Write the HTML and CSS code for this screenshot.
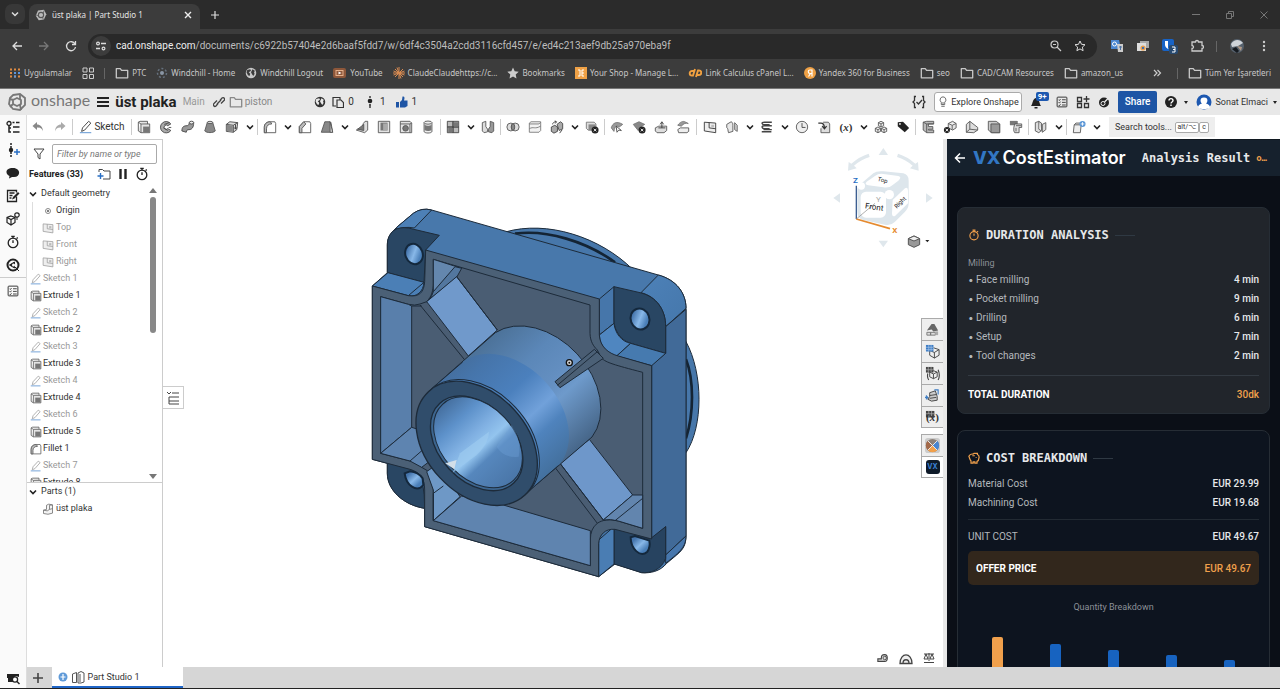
FILE: index.html
```html
<!DOCTYPE html>
<html lang="en">
<head>
<meta charset="utf-8">
<title>üst plaka | Part Studio 1</title>
<link rel="stylesheet" href="styles.css">
</head>
<body>
<svg class="defs" aria-hidden="true">
  <defs>
    <symbol id="caret" viewBox="0 0 10 10"><path d="M2 3.500l3 3 3-3" fill="none" stroke="#222" stroke-width="1.600"/></symbol>
    <symbol id="folder" viewBox="0 0 16 16"><path d="M1.500 3h4.500l1.500 2h7v8.500h-13z" fill="none" stroke="currentColor" stroke-width="1.500" stroke-linejoin="round"/></symbol>
    <symbol id="globe" viewBox="0 0 16 16"><circle cx="8" cy="8" r="7" fill="currentColor"/><path d="M3 4l4-1 1 2-3 2 2 2-1 3-2-1-2-4zM10 3l3 2-1 3 1 1-2 3-2-3-1-2z" fill="var(--land,#3c3c3c)"/></symbol>
    <symbol id="extrude" viewBox="0 0 16 16"><path d="M1.500 2.500l2-1h8.500v3M1.500 2.500v10l3 2M1.500 2.500l3 2" fill="#e4e4e4" stroke="#555"/><path d="M4.500 4.500h10v10h-10z" fill="#e4e4e4" stroke="#555"/><path d="M7 7.500h7v6.500h-7z" fill="#777"/></symbol>
    <symbol id="revolve" viewBox="0 0 16 16"><path d="M13.500 4.500A6.500 6.500 0 1 0 13.500 12L10 9.800A2.400 2.400 0 1 1 10 6.500z" fill="#aaa" stroke="#444"/><path d="M6 5l6-2M5 9l5 3M11 8.500h3" stroke="#444"/></symbol>
    <symbol id="sweep" viewBox="0 0 16 16"><path d="M1 12.500C1 8 3 6.500 7 6.500c2 0 2-1 2.500-3.500h5c0 6-2.500 8-5.500 8-2 0-2.500.5-3 3z" fill="#999" stroke="#444"/><ellipse cx="12" cy="3" rx="2.500" ry="1.600" fill="#eee" stroke="#444"/></symbol>
    <symbol id="loft" viewBox="0 0 16 16"><path d="M5 2.500h6l3 10c-2 2.500-10 2.500-12 0z" fill="#888" stroke="#555"/><ellipse cx="8" cy="2.800" rx="3" ry="1.300" fill="#ddd" stroke="#555"/></symbol>
    <symbol id="thicken" viewBox="0 0 16 16"><path d="M1.500 5l4-3 9 1-1 8-4 3-8-1z" fill="#ddd" stroke="#444"/><path d="M1.500 5l8 1 5-3M9.500 6v8" fill="none" stroke="#444"/><path d="M2 5.500l7 1v7l-7-1z" fill="#888"/><path d="M12 5v5M10.500 8.500l1.500 2 1.500-2" fill="none" stroke="#333"/></symbol>
    <symbol id="fillet" viewBox="0 0 16 16"><path d="M1.500 14.500v-6c0-4 2.500-6.500 7-6.500h5l1 2v10.500z" fill="#fff" stroke="#555"/><path d="M1.500 8.500c0-4 2.500-6.500 7-6.500l1.500 2.500c-4 0-6 2-6 5.500v4.500h-2.500z" fill="#bbb" stroke="#555"/></symbol>
    <symbol id="chamfer" viewBox="0 0 16 16"><path d="M1.500 14.500v-7l5-5.500h7l1 2v10.500z" fill="#fff" stroke="#555"/><path d="M1.500 7.500l5-5.500 2.500 2.500-4.500 5v5h-3z" fill="#bbb" stroke="#555"/></symbol>
    <symbol id="draft" viewBox="0 0 16 16"><path d="M1.500 14l4-12h6l1 1 2 11z" fill="#888" stroke="#555"/><path d="M11.500 2l3 12h-3z" fill="#ddd" stroke="#555"/></symbol>
    <symbol id="rib" viewBox="0 0 16 16"><path d="M9.500 4l2-2.500h3v10l-3.500 3-9.500-3 2-1.500 4 1z" fill="#ddd" stroke="#555"/><path d="M3 10.500L10 5v7z" fill="#777" stroke="#555"/></symbol>
    <symbol id="shell" viewBox="0 0 16 16"><path d="M1.500 1.500h13v13h-13z" fill="#e4e4e4" stroke="#555"/><path d="M4 3h8v9h-8z" fill="#777"/><path d="M7 4h5v8h-5z" fill="#aaa"/></symbol>
    <symbol id="hole" viewBox="0 0 16 16"><path d="M1.500 1.500h11l2 2v11h-13zM1.500 4.500h11v10M12.500 4.500l2-1" fill="#e4e4e4" stroke="#555"/><circle cx="7.500" cy="9.500" r="3.200" fill="#777" stroke="#555"/></symbol>
    <symbol id="thread" viewBox="0 0 16 16"><path d="M3.500 3v10c0 2.500 9 2.500 9 0V3" fill="#eee" stroke="#555"/><path d="M4 5.500c2 1.500 6 1.500 8 0v6c-2 1.500-6 1.500-8 0z" fill="#777"/><ellipse cx="8" cy="3" rx="4.500" ry="1.800" fill="#eee" stroke="#555"/></symbol>
    <symbol id="pattern" viewBox="0 0 16 16"><path d="M1.500 1.500h6.500v6.500h-6.500zM8 1.500h6.500v6.500H8zM1.500 8h6.500v6.500h-6.500zM8 8h6.500v6.500H8z" fill="#bbb" stroke="#444"/><path d="M9 2.500h5v5h-5zM2.500 9h5v5h-5z" fill="#777"/></symbol>
    <symbol id="mirror" viewBox="0 0 16 16"><path d="M1.500 3l4-1.500v6l2 3v3l-4 1-2-2z" fill="#ddd" stroke="#555"/><path d="M14.500 3l-4-1.500v6l-2 3v3l4 1 2-2z" fill="#999" stroke="#555"/></symbol>
    <symbol id="boolean" viewBox="0 0 16 16"><circle cx="5.500" cy="8" r="4.500" fill="#ddd" stroke="#555"/><circle cx="10.500" cy="8" r="4.500" fill="#ddd" stroke="#555"/><ellipse cx="8" cy="8" rx="2" ry="3.700" fill="#888" stroke="#555"/></symbol>
    <symbol id="split" viewBox="0 0 16 16"><path d="M1.500 3.500l2-1.500h11v10l-2 2h-11z" fill="#f2f2f2" stroke="#777"/><path d="M1.500 4.500h11l2-2M1.500 10c5-3 6 1 13-3" fill="none" stroke="#777"/></symbol>
    <symbol id="transform" viewBox="0 0 16 16"><path d="M1.500 8l4-2 3 2v5l-4 2-3-2zM8 5l4-3 2.500 2v6l-4 2z" fill="#aaa" stroke="#444"/><path d="M3 5c0-2 2-3 4-3M5.500 1l2 1-1.500 2M14 11l-3 4" fill="none" stroke="#333"/></symbol>
    <symbol id="deletepart" viewBox="0 0 16 16"><path d="M1.500 2.500h9l2 2v7h-9l-2-2z" fill="#ddd" stroke="#777"/><path d="M4 5h8v7h-8z" fill="#888"/><circle cx="11.500" cy="11.500" r="4" fill="#222"/><path d="M10 10l3 3M13 10l-3 3" stroke="#fff"/></symbol>
    <symbol id="modface" viewBox="0 0 16 16"><path d="M1.500 9C3 3 8 1 14.500 5l-4 3c-3-2-5-1-6 5z" fill="#999" stroke="#777"/><path d="M7 7l1 7 2-2.500 3 .5z" fill="#fff" stroke="#444"/></symbol>
    <symbol id="delface" viewBox="0 0 16 16"><path d="M1.500 5L8 2l6.500 3-4 2.500L7 12z" fill="#888" stroke="#777"/><circle cx="11.500" cy="11.500" r="4" fill="#222"/><path d="M10 10l3 3M13 10l-3 3" stroke="#fff"/></symbol>
    <symbol id="moveface" viewBox="0 0 16 16"><path d="M1.500 9l4-2h9v5l-3 2.500h-8l-2-2z" fill="#ddd" stroke="#555"/><path d="M5 9h8M9 9V3M7 5l2-3 2 3" fill="none" stroke="#333"/></symbol>
    <symbol id="replace" viewBox="0 0 16 16"><path d="M2 6c3-4 6-5 8-4l4 2c-3-1-5 0-8 3z" fill="#999" stroke="#777"/><path d="M2 11l3-2h9.500v4l-2 1.500H3z" fill="#eee" stroke="#555"/></symbol>
    <symbol id="plane" viewBox="0 0 16 16"><path d="M1.500 2.500l13 1v11l-13-2z" fill="#eee" stroke="currentColor"/><path d="M7 3v6l7.500 1" fill="none" stroke="currentColor"/><path d="M9.500 5.500h3v3h-3z" fill="#bbb"/></symbol>
    <symbol id="surface" viewBox="0 0 16 16"><path d="M2 5l5-3c2 1 2 2 2 4v7l-5 1.500c-1-3 0-4-2-6z" fill="#e8e8e8" stroke="#555"/><path d="M11 3l3 3v7l-3-2z" fill="#ccc" stroke="#666"/></symbol>
    <symbol id="helix" viewBox="0 0 16 16"><path d="M13.500 2.500H5c-4 0-3 3 0 3h6M13.500 6.500H5c-4 0-3 3.500 0 3.500h6M13.500 11H4M2 13.500h11" fill="none" stroke="#444" stroke-width="1.600"/></symbol>
    <symbol id="clock" viewBox="0 0 16 16"><circle cx="8" cy="8" r="6.500" fill="#eee" stroke="#555"/><path d="M8 3.500v5h4" fill="none" stroke="#444"/></symbol>
    <symbol id="derived" viewBox="0 0 16 16"><path d="M7 2.500h6l1.500 2v10h-10v-5" fill="#ddd" stroke="#555"/><path d="M1.500 3.500h3c3 0 4 2 4 6M6 7l2.500 3L11 7" fill="none" stroke="#333" stroke-width="1.400"/></symbol>
    <symbol id="composite" viewBox="0 0 16 16"><path d="M8 1.500l3 1.500v3.500L8 8 5 6.500V3zM4.500 8l3 1.500V13l-3 1.500-3-1.500V9.500zM11.500 8l3 1.500V13l-3 1.500-3-1.500V9.500zM5 3l3 1.500L11 3M8 4.500V8M1.500 9.500l3 1.500 3-1.500M4.500 11v3.500M8.500 9.500l3 1.500 3-1.500M11.500 11v3.500" fill="#eee" stroke="#555"/></symbol>
    <symbol id="tag" viewBox="0 0 16 16"><path d="M2 2.500l6-.5 7 7-5 5-8-7z" fill="#222"/><circle cx="4.500" cy="4.500" r="1" fill="#fff"/></symbol>
    <symbol id="bracket" viewBox="0 0 16 16"><path d="M2.500 2.500l4-1h8v3h-6v3h5v3h-5v1h6v3h-8l-4-3z" fill="#bbb" stroke="#555"/><path d="M2.500 2.500l4 2v10M6.500 4.500h8" fill="none" stroke="#555"/></symbol>
    <symbol id="boxx" viewBox="0 0 16 16"><path d="M6 4l5-2.500L15 4v5l-4 2.500L6 9zM6 4l4.500 2L15 4M10.500 6v5" fill="#e4e4e4" stroke="#555"/><circle cx="4.500" cy="11.500" r="3.500" fill="#222"/><path d="M3 10l3 3M6 10l-3 3" stroke="#fff"/></symbol>
    <symbol id="bend" viewBox="0 0 16 16"><path d="M1.500 14V5l4-3.500 9 7v3L10 14.500z" fill="#ddd" stroke="#555"/><path d="M5.500 1.500v9l9 1M1.500 14l4-3.500" fill="none" stroke="#555"/></symbol>
    <symbol id="square" viewBox="0 0 16 16"><path d="M1.500 1.500h9l4 3v10h-9l-4-3z" fill="#ccc" stroke="#555"/><path d="M4.500 4.500h10v10h-10z" fill="#999" stroke="#555"/></symbol>
    <symbol id="pencil" viewBox="0 0 16 16"><path d="M3 13l1-4 7-7.500 2.500 2L6.500 11.500z" fill="none" stroke="currentColor"/><path d="M1 14.500h13" stroke="#4b88cc"/></symbol>
    <symbol id="checklist" viewBox="0 0 16 16"><rect x="1.500" y="1.500" width="13" height="13" rx="1" fill="none" stroke="#333" stroke-width="1.300"/><path d="M3.500 5l1 1 1.500-2M3.500 8.500l1 1 1.500-2M3.500 12l1 1 1.500-2M8 5h5M8 8.500h5M8 12h5" fill="none" stroke="#333" stroke-width="1.200"/></symbol>
    <symbol id="stopwatch" viewBox="0 0 16 16"><circle cx="8" cy="9" r="5.500" fill="none" stroke="currentColor" stroke-width="1.500"/><path d="M6 1.500h4M8 2v2M12 4l1.500-1M8 9V6" stroke="currentColor" stroke-width="1.500"/></symbol>
    <symbol id="part" viewBox="0 0 16 16"><path d="M2 9.500l4-1V3l3-1.500 5 1v11l-6 1.500-6-1z" fill="#f4f4f4" stroke="#666"/><path d="M2 9.500l5 1 3-2V3l4-.5M10 8.500l4-1" fill="none" stroke="#666"/></symbol>
  </defs>
</svg>

<header class="browser">
  <div class="tabstrip">
    <button class="tabsearch" aria-label="Search tabs"><svg viewBox="0 0 10 10" class="i10"><path d="M2 3.500l3 3 3-3" fill="none" stroke="#ddd" stroke-width="1.500"/></svg></button>
    <div class="tab">
      <svg viewBox="0 0 16 16" class="i12"><path d="M4 2l8-1 3 6-3 7-7 1-4-6z" fill="#bbb"/><circle cx="8" cy="8" r="3.500" fill="none" stroke="#555" stroke-width="1.500"/><path d="M1 8l4 1M12 2l-1 4M11 14l-1-3" stroke="#555"/></svg>
      <span>üst plaka | Part Studio 1</span>
      <button aria-label="Close tab"><svg viewBox="0 0 10 10" class="i10"><path d="M2 2l6 6M8 2l-6 6" stroke="#eee" stroke-width="1.400"/></svg></button>
    </div>
    <button class="newtab" aria-label="New tab"><svg viewBox="0 0 10 10" class="i10"><path d="M5 1v8M1 5h8" stroke="#ddd" stroke-width="1.200"/></svg></button>
    <div class="winctl">
      <button aria-label="Minimize"><svg viewBox="0 0 10 10" class="i10"><path d="M1 4.500h8" stroke="#777"/></svg></button>
      <button aria-label="Restore"><svg viewBox="0 0 10 10" class="i10"><path d="M1.500 3.500h5v5h-5zM3.500 3v-1.500h5v5h-1.500" fill="none" stroke="#777"/></svg></button>
      <button aria-label="Close"><svg viewBox="0 0 10 10" class="i10"><path d="M1.500 1.500l7 7M8.500 1.500l-7 7" stroke="#777"/></svg></button>
    </div>
  </div>
  <div class="address">
    <button aria-label="Back"><svg viewBox="0 0 12 12" class="i12"><path d="M11 6H2M6 2L2 6l4 4" fill="none" stroke="#ddd" stroke-width="1.300"/></svg></button>
    <button aria-label="Forward"><svg viewBox="0 0 12 12" class="i12"><path d="M1 6h9M6 2l4 4-4 4" fill="none" stroke="#777" stroke-width="1.300"/></svg></button>
    <button aria-label="Reload"><svg viewBox="0 0 12 12" class="i12"><path d="M10 4A4.500 4.500 0 1 0 10.500 7M10.500 1v3.500H7" fill="none" stroke="#ddd" stroke-width="1.300"/></svg></button>
    <div class="omnibox">
      <span class="site"><svg viewBox="0 0 12 12" class="i12"><circle cx="3" cy="3.500" r="1.400" fill="none" stroke="#ddd" stroke-width="1.200"/><path d="M6 3.500h5M1 8.500h4" stroke="#ddd" stroke-width="1.300"/><circle cx="8.500" cy="8.500" r="1.400" fill="none" stroke="#ddd" stroke-width="1.200"/></svg></span>
      <span class="url"><b>cad.onshape.com</b>/documents/c6922b57404e2d6baaf5fdd7/w/6df4c3504a2cdd3116cfd457/e/ed4c213aef9db25a970eba9f</span>
      <button aria-label="Zoom"><svg viewBox="0 0 12 12" class="i12"><circle cx="4.500" cy="4.500" r="3.500" fill="none" stroke="#ccc" stroke-width="1.200"/><path d="M7 7l4 4M3 4.500h3" stroke="#ccc" stroke-width="1.200"/></svg></button>
      <button aria-label="Bookmark"><svg viewBox="0 0 12 12" class="i12"><path d="M6 1l1.500 3.300 3.500.4-2.600 2.400.7 3.600L6 8.900l-3.100 1.800.7-3.600L1 4.700l3.500-.4z" fill="none" stroke="#ddd"/></svg></button>
    </div>
    <div class="exts">
      <svg viewBox="0 0 14 14" class="i14"><path d="M1 1h8l2 9H1z" fill="#4b87d0"/><path d="M7 5h6v8H8z" fill="#ccc"/><circle cx="4.500" cy="5" r="2" fill="none" stroke="#fff"/><path d="M9 8h3M10.500 7v4" stroke="#4b6fa0"/></svg>
      <svg viewBox="0 0 14 14" class="i14"><path d="M4 2h9v7H4z" fill="#aaa"/><path d="M1 4h9v8H1z" fill="#ddd"/><circle cx="7" cy="9" r="2.600" fill="#f0a048"/><circle cx="7" cy="9" r="1.200" fill="#3b70b8"/></svg>
      <svg viewBox="0 0 16 16" class="i16"><rect x="0" y="1" width="12" height="12" rx="2" fill="#1763c6"/><path d="M3 3h6v4c0 2-2 3-3 4-1-1-3-2-3-4z" fill="#fff"/><path d="M6 3h3v4c0 2-2 3-3 4z" fill="#1763c6"/><rect x="7" y="7" width="9" height="9" rx="2" fill="#284a70"/><path d="M10 9h3v5h-3M11 11.500h2" stroke="#fff" fill="none"/></svg>
      <svg viewBox="0 0 14 14" class="i14"><path d="M2 3h3.500a1.500 1.500 0 1 1 3 0H12v3.500a1.500 1.500 0 1 1 0 3V12H2V9.500a1.500 1.500 0 0 0 0-3z" fill="none" stroke="#ccc" stroke-width="1.300"/></svg>
      <i class="bar"></i>
      <svg viewBox="0 0 16 16" class="i16"><circle cx="8" cy="8" r="7" fill="#56616d"/><path d="M2 6c3-5 9-5 12-1l-5 3-6 1z" fill="#cfd4da"/><path d="M3 11l4-2 3 4-2 2z" fill="#151a20"/><path d="M8 8l5 1-1 4z" fill="#b19a88"/></svg>
      <svg viewBox="0 0 14 14" class="i14"><circle cx="7" cy="3" r="1.200" fill="#ccc"/><circle cx="7" cy="7" r="1.200" fill="#ccc"/><circle cx="7" cy="11" r="1.200" fill="#ccc"/></svg>
    </div>
  </div>
  <nav class="bookmarks">
    <a href="#"><svg viewBox="0 0 12 12" class="i12"><path d="M1 2.500h10M1 6h10M1 9.500h10" stroke="#e08b42" stroke-width="2" stroke-dasharray="2 2"/><path d="M5 6h6M5 9.500h2" stroke="#5b95dd" stroke-width="2" stroke-dasharray="2 2"/></svg>Uygulamalar</a>
    <a href="#" aria-label="Tab groups"><svg viewBox="0 0 12 12" class="i12"><path d="M1 1h4v4H1zM7.500 1h4v4h-4zM1 7.500h4v4H1zM7.500 7.500h4v4h-4z" fill="none" stroke="#ccc"/></svg></a>
    <i class="bar"></i>
    <a href="#"><svg class="i14"><use href="#folder"/></svg>PTC</a>
    <a href="#"><svg viewBox="0 0 12 12" class="i12"><circle cx="6" cy="6" r="2" fill="#8a96a5"/><circle cx="6" cy="6" r="4.500" fill="none" stroke="#66717e" stroke-dasharray="2 2" stroke-width="1.500"/></svg>Windchill - Home</a>
    <a href="#"><svg class="i12"><use href="#globe"/></svg>Windchill Logout</a>
    <a href="#"><svg viewBox="0 0 14 12" class="i14"><rect x="0" y="1" width="13" height="10" rx="2" fill="#8d573a"/><rect x="3" y="3.500" width="7" height="5" fill="none" stroke="#e6b08a"/><path d="M5.500 4.500l3 1.500-3 1.500z" fill="#fff"/></svg>YouTube</a>
    <a href="#"><svg viewBox="0 0 12 12" class="i12"><path d="M6 0v12M0 6h12M2 2l8 8M10 2l-8 8M4 .5l4 11M.5 8l11-4M.5 4l11 4" stroke="#d68a52"/></svg>ClaudeClaudehttps://c...</a>
    <a href="#"><svg viewBox="0 0 12 12" class="i12"><path d="M6 .5l1.700 3.700 4 .5-3 2.700.8 4L6 9.400l-3.500 2 .8-4-3-2.700 4-.5z" fill="#ccc"/></svg>Bookmarks</a>
    <a href="#"><svg viewBox="0 0 12 12" class="i12"><path d="M0 0h12v12H0z" fill="#efa146"/><path d="M3 3h2v6H3M9 3H7v6h2M7 6h2" fill="none" stroke="#fff"/></svg>Your Shop - Manage L...</a>
    <a href="#"><svg viewBox="0 0 14 12" class="i14"><path d="M6 4H4a2.300 2.300 0 0 0 0 4.600h1L7 2M8 10l2-6.500h1a2.200 2.200 0 0 1 0 4.500H8" fill="none" stroke="#f0a040" stroke-width="1.900"/></svg>Link Calculus cPanel L...</a>
    <a href="#"><svg viewBox="0 0 12 12" class="i12"><circle cx="6" cy="6" r="6" fill="#efa146"/><path d="M8 2.500v7M8 3H6a1.500 1.500 0 0 0 0 3.500h2M6.500 6.500l-2 3" fill="none" stroke="#fff" stroke-width="1.200"/></svg>Yandex 360 for Business</a>
    <a href="#"><svg class="i14"><use href="#folder"/></svg>seo</a>
    <a href="#"><svg class="i14"><use href="#folder"/></svg>CAD/CAM Resources</a>
    <a href="#"><svg class="i14"><use href="#folder"/></svg>amazon_us</a>
    <button class="more" aria-label="More bookmarks"><svg viewBox="0 0 10 10" class="i10"><path d="M2 2l3 3-3 3M5.500 2l3 3-3 3" fill="none" stroke="#ccc" stroke-width="1.200"/></svg></button>
    <i class="bar"></i>
    <a href="#"><svg class="i14"><use href="#folder"/></svg>Tüm Yer İşaretleri</a>
  </nav>
</header>

<header class="docbar">
  <svg viewBox="0 0 18 18" class="i18"><path d="M5 2l7-1 5 4v7l-5 5-7-1-4-5 1-6z" fill="none" stroke="#777" stroke-width="1.800"/><path d="M9 5l4 2v4l-4 2-4-2V7zM1 6l5 1M12 1v5M12 12l1 5M5 11l-3 3" fill="none" stroke="#777" stroke-width="1.800"/></svg>
  <span class="brand">onshape</span>
  <button aria-label="Menu"><svg viewBox="0 0 12 12" class="i12"><path d="M0 2h12M0 6h12M0 10h12" stroke="#222" stroke-width="2"/></svg></button>
  <h1>üst plaka</h1>
  <span class="branch">Main</span>
  <button aria-label="Copy link" class="link"><svg viewBox="0 0 12 12" class="i12"><path d="M5 7.500l-2 2.500a1.500 1.500 0 0 1-2-2.500L4 4.500M7 4.500L9 2a1.500 1.500 0 0 1 2 2.500L8 7.500M4 8l4-4" fill="none" stroke="#444" stroke-width="1.300"/></svg></button>
  <a href="#" class="loc"><svg class="i14"><use href="#folder"/></svg>piston</a>
  <div class="stats">
    <svg class="i12 world"><use href="#globe"/></svg>
    <span><svg viewBox="0 0 12 12" class="i12"><path d="M4 10H1V1.500h7V4M3 1.500h3M5 4h4l2.500 2.500v5H5z" fill="none" stroke="#333" stroke-width="1.200"/></svg>0</span>
    <span><svg viewBox="0 0 12 12" class="i12"><path d="M6 0v2M6 10v2" stroke="#222" stroke-width="1.300"/><circle cx="6" cy="5" r="2.300" fill="#222"/><circle cx="6" cy="9" r="1" fill="#222"/></svg>1</span>
    <span><svg viewBox="0 0 12 12" class="i12"><path d="M0 6h3v5.500H0zM4 6l2-2 .5-3.500c2-.5 2.500 1 1.500 4h3.500V10L9 11.500H4z" fill="#1f55a5"/></svg>1</span>
  </div>
  <div class="account">
    <button aria-label="Checks"><svg viewBox="0 0 14 14" class="i14"><path d="M4 1.500H2.500v4L1 7l1.500 1.500v4H4M10 1.500h1.500v4L13 7l-1.500 1.500v4H10M4.500 7l2 2 3.500-4" fill="none" stroke="#333" stroke-width="1.300"/></svg></button>
    <button class="explore"><svg viewBox="0 0 12 14" class="i12"><path d="M6 1a3.500 3.500 0 0 1 2 6.300V10H4V7.300A3.500 3.500 0 0 1 6 1zM4 12h4M6 7v3" fill="none" stroke="#555"/></svg>Explore Onshape</button>
    <button class="bell" aria-label="Notifications"><svg viewBox="0 0 14 14" class="i14"><path d="M1 11c2-2 1-7 5-8 4 1 3 6 5 8zM4.500 12h3v1.500h-3z" fill="#222"/></svg><span>9+</span></button>
    <button aria-label="Tasks"><svg class="i12"><use href="#checklist"/></svg></button>
    <button aria-label="Apps"><svg viewBox="0 0 14 14" class="i14"><path d="M1.500 2.500h4v4h-4zM1.500 8.500h4v4h-4zM8.500 8.500h4v4h-4zM10.500 1v6M7.500 4h6" fill="none" stroke="#333" stroke-width="1.300"/></svg></button>
    <button aria-label="Learning"><svg viewBox="0 0 12 12" class="i12"><circle cx="6" cy="6.500" r="5" fill="#222"/><circle cx="5" cy="7.500" r="2" fill="none" stroke="#eee"/><path d="M6.500 6L10 2.500" stroke="#eee" stroke-width="1.300"/></svg></button>
    <button class="share">Share</button>
    <button aria-label="Help" class="help"><svg viewBox="0 0 12 12" class="i12"><circle cx="6" cy="6" r="6" fill="#222"/><path d="M4 4.500c0-2.500 4-2.500 4 0C8 6 6 6 6 7.500M6 8.500V10" fill="none" stroke="#fff" stroke-width="1.400"/></svg><i class="tri"></i></button>
    <button class="user"><svg viewBox="0 0 16 16" class="i16"><circle cx="8" cy="8" r="7.500" fill="#1d58b0"/><path d="M8 3.500c5 0 3.500 5 2 6 3 1 4 2 4 4-3 2-9 2-12 0 0-2 1-3 4-4-1.500-1-3-6 2-6z" fill="#fff"/></svg>Sonat Elmaci<i class="tri"></i></button>
  </div>
</header>

<div class="workspace">
  <aside class="rail">
    <button aria-label="Feature list"><svg viewBox="0 0 14 14" class="i14"><circle cx="3" cy="3.500" r="2" fill="none" stroke="#222" stroke-width="1.300"/><path d="M3 5.500V12h2M6.500 2.500h2M10 2.500h3.500M7 7h6.500M7 12h6.500M3 8h2" fill="none" stroke="#222" stroke-width="1.500"/></svg></button>
    <button aria-label="Versions"><svg viewBox="0 0 14 14" class="i14"><circle cx="5" cy="7" r="2.200" fill="#222"/><path d="M5 0v2M5 3v2M5 9v2M5 12v2" stroke="#222" stroke-width="1.500"/><path d="M11 6v6M8 9h6" stroke="#2a6fc4" stroke-width="1.500"/></svg></button>
    <button aria-label="Comments"><svg viewBox="0 0 14 14" class="i14"><path d="M7 2c8 0 8 9 1 9-1 0-1 0-2 0l-3 1.500.5-2.500C-1 8-1 2 7 2z" fill="#222"/></svg></button>
    <button aria-label="Notes"><svg viewBox="0 0 14 14" class="i14"><path d="M10.500 7.500v5h-9v-11h9v2M3.500 4h5M3.500 6.500h3M3.500 9h2" fill="none" stroke="#222" stroke-width="1.300"/><path d="M6 10.500l1-2.500 5-5 1.500 1.500-5 5z" fill="#222"/></svg></button>
    <button aria-label="Render"><svg viewBox="0 0 14 14" class="i14"><path d="M5 4l4 1.500v5L5 13l-4-2.500v-5zM1 5.500L5 7.500l4-2M5 7.500V13" fill="none" stroke="#222" stroke-width="1.200"/><circle cx="11" cy="3" r="2.200" fill="none" stroke="#222" stroke-width="1.200"/><path d="M11 5v3" stroke="#222"/></svg></button>
    <button aria-label="History"><svg class="i14"><use href="#stopwatch"/></svg></button>
    <button aria-label="Assistant"><svg viewBox="0 0 14 14" class="i14"><circle cx="7" cy="7" r="5.500" fill="none" stroke="#222" stroke-width="2"/><path d="M3.500 7l5-3v6zM9 9l4 4" fill="#222" stroke="#222"/><circle cx="7.500" cy="7" r="1.500" fill="#fff"/></svg></button>
    <hr>
    <button aria-label="Tasks"><svg class="i12"><use href="#checklist"/></svg></button>
    <button class="last" aria-label="Find"><svg viewBox="0 0 14 14" class="i14"><path d="M1 3h12v3l-3-1-3 2v4H2V7H1z" fill="#222"/><circle cx="9" cy="8.500" r="2.600" fill="#fff" stroke="#222" stroke-width="1.300"/><path d="M11 10.500l2.500 2.500" stroke="#222" stroke-width="1.500"/></svg></button>
  </aside>

  <div class="studio">
    <div class="toolbar">
      <button aria-label="Undo"><svg viewBox="0 0 14 14" class="i14"><path d="M6 2L1.500 6 6 10V7.500c3 0 5 .5 6 4C12 7 9 4.500 6 4.500z" fill="#888"/></svg></button>
      <button aria-label="Redo"><svg viewBox="0 0 14 14" class="i14"><path d="M8 2l4.500 4L8 10V7.500c-3 0-5 .5-6 4C2 7 5 4.500 8 4.500z" fill="#aaa"/></svg></button>
      <i></i>
      <button class="sketch"><svg class="i14"><use href="#pencil"/></svg>Sketch</button>
      <i></i>
      <button aria-label="Extrude"><svg><use href="#extrude"/></svg></button>
      <button aria-label="Revolve"><svg><use href="#revolve"/></svg></button>
      <button aria-label="Sweep"><svg><use href="#sweep"/></svg></button>
      <button aria-label="Loft"><svg><use href="#loft"/></svg></button>
      <button aria-label="Thicken"><svg><use href="#thicken"/></svg></button>
      <button class="c" aria-label="More solids"><svg><use href="#caret"/></svg></button>
      <i></i>
      <button aria-label="Fillet"><svg><use href="#fillet"/></svg></button>
      <button class="c" aria-label="More fillets"><svg><use href="#caret"/></svg></button>
      <button aria-label="Chamfer"><svg><use href="#chamfer"/></svg></button>
      <button aria-label="Draft"><svg><use href="#draft"/></svg></button>
      <button class="c" aria-label="More drafts"><svg><use href="#caret"/></svg></button>
      <button aria-label="Rib"><svg><use href="#rib"/></svg></button>
      <button aria-label="Shell"><svg><use href="#shell"/></svg></button>
      <button aria-label="Hole"><svg><use href="#hole"/></svg></button>
      <button aria-label="Thread"><svg><use href="#thread"/></svg></button>
      <i></i>
      <button aria-label="Pattern"><svg><use href="#pattern"/></svg></button>
      <button class="c" aria-label="More patterns"><svg><use href="#caret"/></svg></button>
      <button aria-label="Mirror"><svg><use href="#mirror"/></svg></button>
      <i></i>
      <button aria-label="Boolean"><svg><use href="#boolean"/></svg></button>
      <button aria-label="Split"><svg><use href="#split"/></svg></button>
      <button aria-label="Transform"><svg><use href="#transform"/></svg></button>
      <button class="c" aria-label="More transforms"><svg><use href="#caret"/></svg></button>
      <button aria-label="Delete part"><svg><use href="#deletepart"/></svg></button>
      <i></i>
      <button aria-label="Modify fillet"><svg><use href="#modface"/></svg></button>
      <button aria-label="Delete face"><svg><use href="#delface"/></svg></button>
      <button aria-label="Move face"><svg><use href="#moveface"/></svg></button>
      <button aria-label="Replace face"><svg><use href="#replace"/></svg></button>
      <i class="wide"></i>
      <button aria-label="Plane"><svg><use href="#plane"/></svg></button>
      <button aria-label="Surface"><svg><use href="#surface"/></svg></button>
      <button class="c" aria-label="More surfaces"><svg><use href="#caret"/></svg></button>
      <button aria-label="Helix"><svg><use href="#helix"/></svg></button>
      <button class="c" aria-label="More curves"><svg><use href="#caret"/></svg></button>
      <button aria-label="Timer"><svg><use href="#clock"/></svg></button>
      <button aria-label="Derived"><svg><use href="#derived"/></svg></button>
      <button class="var">(<em>x</em>)</button>
      <button class="c" aria-label="More variables"><svg><use href="#caret"/></svg></button>
      <button aria-label="Composite"><svg><use href="#composite"/></svg></button>
      <button aria-label="Tag"><svg><use href="#tag"/></svg></button>
      <i></i>
      <button aria-label="Flange"><svg><use href="#bracket"/></svg></button>
      <button aria-label="Remove box"><svg><use href="#boxx"/></svg></button>
      <button aria-label="Bend"><svg><use href="#bend"/></svg></button>
      <button aria-label="Tab"><svg><use href="#square"/></svg></button>
      <button aria-label="Joint"><svg viewBox="0 0 16 16"><path d="M1 1h9v5H1z" fill="#777"/><path d="M6.500 4.500h8v4h-3v6h-5l-1-2v-4z" fill="#ddd" stroke="#555"/><path d="M8 6.500h6M8 9v4" stroke="#555"/></svg></button>
      <i></i>
      <button aria-label="Frame"><svg viewBox="0 0 16 16"><path d="M1.500 3l4-1.500 3 2V12l-3 2.500-4-2zM5.500 1.500v9l3 2M9.500 5l4-2v8l-4 3z" fill="#ddd" stroke="#555"/></svg></button>
      <button class="c" aria-label="More frames"><svg><use href="#caret"/></svg></button>
      <i></i>
      <button aria-label="Custom features"><svg viewBox="0 0 16 16"><path d="M1.500 14.500l1-9h8l-1 9zM2.500 5.500l2-2h6v2" fill="#eee" stroke="#555"/><circle cx="12" cy="4.500" r="3.500" fill="#5a96d6"/><path d="M12 2.500v4M10 4.500h4" stroke="#fff"/></svg></button>
      <button class="c" aria-label="More custom features"><svg><use href="#caret"/></svg></button>
      <label class="search"><input type="text" placeholder="Search tools..." aria-label="Search tools"><kbd>alt/⌥</kbd><kbd>c</kbd></label>
    </div>

    <div class="main">
      <section class="tree">
        <div class="filter">
          <svg viewBox="0 0 12 12" class="i12"><path d="M1 1h10L7 6v5L5 9.500V6z" fill="none" stroke="#444"/></svg>
          <input type="text" placeholder="Filter by name or type" aria-label="Filter by name or type">
        </div>
        <div class="feathead">
          <b>Features (33)</b>
          <button aria-label="New folder"><svg viewBox="0 0 14 12" class="i14"><path d="M2 4V1.500h3.500L7 3h6v8H6" fill="none" stroke="#444"/><path d="M3.500 5v6M.5 8h6" stroke="#2a6fc4" stroke-width="1.400"/></svg></button>
          <button aria-label="Suspend"><svg viewBox="0 0 12 12" class="i12"><path d="M3.500 1v10M8.500 1v10" stroke="#222" stroke-width="2.400"/></svg></button>
          <button aria-label="Timing"><svg class="i14"><use href="#stopwatch"/></svg></button>
        </div>
        <div class="features">
          <ul>
            <li class="group"><svg class="i10"><use href="#caret"/></svg>Default geometry
              <ul class="sub">
                <li><svg viewBox="0 0 12 12" class="i12"><circle cx="6" cy="6" r="2.500" fill="none" stroke="#888"/><circle cx="6" cy="6" r="1" fill="#555"/></svg>Origin</li>
                <li class="off"><svg class="i12"><use href="#plane"/></svg>Top</li>
                <li class="off"><svg class="i12"><use href="#plane"/></svg>Front</li>
                <li class="off"><svg class="i12"><use href="#plane"/></svg>Right</li>
              </ul>
            </li>
            <li class="off"><svg class="i12"><use href="#pencil"/></svg>Sketch 1</li>
            <li><svg class="i12"><use href="#extrude"/></svg>Extrude 1</li>
            <li class="off"><svg class="i12"><use href="#pencil"/></svg>Sketch 2</li>
            <li><svg class="i12"><use href="#extrude"/></svg>Extrude 2</li>
            <li class="off"><svg class="i12"><use href="#pencil"/></svg>Sketch 3</li>
            <li><svg class="i12"><use href="#extrude"/></svg>Extrude 3</li>
            <li class="off"><svg class="i12"><use href="#pencil"/></svg>Sketch 4</li>
            <li><svg class="i12"><use href="#extrude"/></svg>Extrude 4</li>
            <li class="off"><svg class="i12"><use href="#pencil"/></svg>Sketch 6</li>
            <li><svg class="i12"><use href="#extrude"/></svg>Extrude 5</li>
            <li><svg class="i12"><use href="#fillet"/></svg>Fillet 1</li>
            <li class="off"><svg class="i12"><use href="#pencil"/></svg>Sketch 7</li>
            <li><svg class="i12"><use href="#extrude"/></svg>Extrude 8</li>
          </ul>
          <div class="scroll"><i class="up"></i><i class="thumb"></i><i class="down"></i></div>
        </div>
        <ul class="parts">
          <li class="group"><svg class="i10"><use href="#caret"/></svg>Parts (1)
            <ul><li><svg class="i12"><use href="#part"/></svg>üst plaka</li></ul>
          </li>
        </ul>
      </section>

      <section class="canvas">
        <button class="panel-toggle" aria-label="Toggle list"><svg viewBox="0 0 14 14" class="i14"><path d="M1 1l2 2 2-2M6 2h7M3 6h10M3 10h10M3 13h10M3 6v7" fill="none" stroke="#444"/></svg></button>
        <svg class="model" viewBox="0 0 1050 1170" role="img" aria-label="üst plaka model">
          <defs>
            <linearGradient id="cyl" gradientUnits="userSpaceOnUse" x1="206" y1="574" x2="494" y2="884"><stop offset="0" stop-color="#456f9f"/><stop offset=".12" stop-color="#4675ab"/><stop offset=".4" stop-color="#4b80bd"/><stop offset=".62" stop-color="#71a1da"/><stop offset=".76" stop-color="#4f83bd"/><stop offset="1" stop-color="#44719f"/></linearGradient>
            <linearGradient id="cyl2" gradientUnits="userSpaceOnUse" x1="400" y1="403" x2="688" y2="713"><stop offset="0" stop-color="#4c7299"/><stop offset=".3" stop-color="#5b87b8"/><stop offset=".55" stop-color="#6590c2"/><stop offset=".65" stop-color="#6e9acb"/><stop offset="1" stop-color="#47678a"/></linearGradient>
            <linearGradient id="bore" gradientUnits="userSpaceOnUse" x1="198" y1="727" x2="510" y2="727"><stop offset="0" stop-color="#456f9f"/><stop offset=".22" stop-color="#5d91ca"/><stop offset=".42" stop-color="#80b0e2"/><stop offset=".56" stop-color="#93c4ee"/><stop offset=".68" stop-color="#5687bd"/><stop offset="1" stop-color="#4a76a8"/></linearGradient>
            <linearGradient id="ho" x1="0" y1="0" x2="1" y2="1"><stop offset=".2" stop-color="#4575ad"/><stop offset=".5" stop-color="#88b8e8"/><stop offset=".75" stop-color="#4a7fb8"/></linearGradient>
            <linearGradient id="cor" x1="0" y1="0" x2="1" y2="1"><stop offset="0" stop-color="#4d81b8"/><stop offset="1" stop-color="#4577ab"/></linearGradient>
          </defs>
          <g stroke="#1d2b3a" stroke-width="3" stroke-linejoin="round">
            <path d="M436 96C560 60 720 110 820 210C900 280 960 380 978 425C1030 520 1030 680 978 758L700 500z" fill="#4777aa"/>
            <path d="M465 101C560 88 680 125 765 187M978 478C1002 540 1002 640 978 715" fill="none" stroke="#142434" stroke-width="8"/>
            <path d="M82 218V130Q82 108 110 82L160 40Q185 22 215 30L895 225C950 240 978 280 978 325V1010C977 1035 970 1048 950 1065L920 1090C900 1115 870 1120 845 1118L765 1092L716 1130L194 980V925C130 915 82 870 82 820V790L37 778V258z" fill="#4878ab"/>
            <path d="M110 82L160 40Q185 22 215 30L163 84Q130 78 110 90z" fill="#4d80b6"/>
            <path d="M895 225C950 240 978 280 978 325L917 380C917 330 890 290 843 278z" fill="url(#cor)"/>
            <path d="M917 380L978 328V1008L917 1065V980L875 1017V495L917 460z" fill="#416a98"/>
            <path d="M917 1065L978 1008C977 1040 965 1052 917 1090z" fill="#4777ad"/>
            <path d="M82 218V135C82 95 110 78 145 84L238 106L197 150L192 247z" fill="#294663"/>
            <path d="M37 258L84 218L192 247C190 275 170 292 145 287z" fill="#4b7fb6"/>
            <path d="M145 287L192 247" fill="none"/>
            <path d="M82 785L170 812Q194 835 194 925C130 915 82 870 82 820z" fill="#294663"/>
            <path d="M718 297L762 260V370L718 405z" fill="#4676aa"/>
            <path d="M762 260L840 278C890 290 917 330 917 380V460L812 430C780 420 762 390 762 360z" fill="#294663"/>
            <path d="M718 405L762 370C765 400 785 425 812 430L770 468C740 460 720 440 718 405z" fill="#4f86c0"/>
            <path d="M770 468L812 430L917 460L875 497z" fill="#467aaf"/>
            <path d="M762 980L870 1017L917 980V1075C905 1110 870 1120 845 1118L762 1092z" fill="#274360"/>
            <path d="M716 1130V1020L762 980V1092z" fill="#4a7db3"/>
            <path d="M197 150L718 297V405C720 440 745 460 775 468L875 497V1017L765 988C735 985 718 1005 716 1030V1130L194 980V870C194 835 180 817 150 808L37 778V258L145 287C180 292 192 275 194 245z" fill="#4b6076"/>
            <path d="M220 178L690 315V400C691 425 700 438 712 450L725 475C740 488 760 494 848 517V985L775 963C750 956 725 960 712 970Q691 985 691 1020V1097L220 962V870C220 840 212 825 202 812L185 802C175 792 165 787 150 783L62 760V290L145 313Q165 318 180 312L200 305C215 290 220 270 220 250z" fill="#4a5d73"/>
            <path d="M62 290L145 313L155 318V682L62 760z" fill="#597fab"/>
            <path d="M62 760L155 682L200 696L240 760L185 802L150 783z" fill="#5e84b0"/>
            <path d="M150 783L205 735M200 815L235 790L300 890L220 962V870z" fill="#6e98c6"/>
            <path d="M220 178L305 205L220 275z" fill="#6487ae"/>
            <path d="M220 275L285 200L305 205L290 232L200 305Q218 290 220 275z" fill="#53779f"/>
            <path d="M200 305L290 230L412 390L325 468z" fill="#7099cb"/>
            <path d="M180 315L316 482M290 230L412 390M155 318H185" fill="none"/>
            <path d="M220 962L305 888L430 915L691 992V1097z" fill="#5f84af"/>
            <path d="M220 962V880L250 858" fill="none"/>
            <path d="M600 790L688 718L818 885L730 960z" fill="#6e97ca"/>
            <path d="M585 802L712 970M600 790L730 960" fill="none"/>
            <path d="M818 885H848V985L775 963Q750 956 730 960z" fill="#6285ae"/>
            <path d="M765 962L848 895" fill="none"/>
            <path d="M206 574L406 398A215 156 47 0 1 696 711L494 884A212 151 47 0 1 206 574z" fill="url(#cyl2)"/>
            <path d="M206 574L308 486A212 151 47 0 1 596 796L494 884A212 151 47 0 1 206 574z" fill="url(#cyl)" stroke="none"/>
            <path d="M206 574L308 486M494 884L596 796" fill="none"/>
            <path d="M585 545L703 448L730 475L600 563z" fill="#4b6076"/>
            <path d="M592 556L712 455" fill="none"/>
            <ellipse cx="356" cy="725" rx="212" ry="151" transform="rotate(47 356 725)" fill="#4a7db6"/>
            <ellipse cx="350" cy="730" rx="212" ry="151" transform="rotate(47 350 730)" fill="#304d6b" stroke-width="4"/>
            <ellipse cx="350" cy="730" rx="163" ry="113" transform="rotate(47 350 730)" fill="#3d6690" stroke-width="4"/>
            <ellipse cx="354" cy="727" rx="156" ry="109" transform="rotate(47 354 727)" fill="url(#bore)"/>
          </g>
          <path d="M278 818L300 760L387 695Q388 728 350 765z" fill="#9ccaf0" opacity=".7"/>
          <path d="M256 790L290 780L283 808z" fill="#d2dfe9"/>
          <path d="M410 740Q430 775 476 770Q485 720 455 675z" fill="#6d9fd6" opacity=".4"/>
          <g fill="url(#ho)" stroke="#14283c" stroke-width="6">
            <ellipse cx="162" cy="162" rx="26" ry="31" transform="rotate(-20 162 162)"/>
            <ellipse cx="840" cy="357" rx="28" ry="32" transform="rotate(-20 840 357)"/>
            <path d="M134 820C138 855 170 880 190 855L188 835Q175 817 150 814z"/>
            <path d="M812 1012C812 1045 840 1075 862 1055Q872 1040 868 1022L825 1008z"/>
          </g>
          <circle cx="628" cy="488" r="9" fill="#ddd" stroke="#111" stroke-width="4"/><circle cx="628" cy="488" r="3" fill="#111"/>
        </svg>

        <svg class="viewcube" viewBox="0 0 369 360" role="img" aria-label="View cube">
          <g fill="#dfe7ec"><path d="M190 24l14 21h-28zM190 322l14-20h-28zM40 174l20-14v28zM338 174l-20-14v28z"/><path d="M84 92l2-26 8 5q25-22 52-30l3 10q-26 8-47 26l8 8zM296 92l-2-26-8 5q-25-22-52-30l-3 10q26 8 47 26l-8 8z"/></g>
          <path d="M112 150Q112 135 130 125L160 100Q170 92 190 94L250 100Q266 104 266 122V190Q266 205 255 215L225 245Q212 258 195 254L130 240Q112 235 112 215z" fill="#dde6ec"/>
          <g fill="#fff"><path d="M140 125L165 108Q175 100 190 102L235 108Q247 112 235 122L218 135Q208 145 190 142L145 136Q132 133 140 125z"/><rect x="122" y="155" width="76" height="78" rx="16"/><path d="M218 180L255 145Q264 140 264 152V190L225 228Q216 232 216 220z"/><circle cx="208" cy="164" r="14"/><circle cx="124" cy="138" r="11"/></g>
          <path d="M109 237V137" stroke="#3d5f92" stroke-width="4"/><path d="M109 237L210 266" stroke="#e58a2f" stroke-width="5"/><path d="M109 237L165 190" stroke="#888" stroke-width="2"/>
          <g class="cubetxt"><text x="99" y="129" fill="#2a6fc4" font-weight="700">Z</text><text x="217" y="280" fill="#e58a2f" font-weight="700">X</text><text x="168" y="186" fill="#aaa">Y</text><text x="134" y="205" transform="rotate(8 134 205)">Front</text><text x="172" y="122" class="sm" transform="rotate(16 172 122)">Top</text><text x="230" y="206" class="sm" transform="rotate(-44 230 206)">Right</text></g>
          <g stroke="#555" stroke-width="3"><path d="M282 288l17 8v18l-17 8-17-8v-18z" fill="#999"/><path d="M265 296l17-8 17 8-17 7z" fill="#eee"/></g><path d="M316 300h12l-6 7z" fill="#222"/>
        </svg>

        <div class="side">
          <div>
            <button aria-label="Appearance"><svg viewBox="0 0 16 16"><path d="M2 9l5-7h3l4 7-5 1-2-2z" fill="#666"/><path d="M2 11h4v3H2zM6 11h5v3H6z" fill="#ddd" stroke="#777"/><path d="M11 10h3v4h-3z" fill="#aaa"/></svg></button>
            <button aria-label="Configurations"><svg viewBox="0 0 16 16"><path d="M9 4l6 2v6l-5 3-5-3V7M5 7l5 2 5-3M10 9v6" fill="#eee" stroke="#444"/><path d="M1 1h8v7H1z" fill="#3c7cc4"/><path d="M1 3.500h8M1 6h8M4 1v7M6.500 1v7" stroke="#a9c6e8" stroke-width=".7"/></svg></button>
            <button aria-label="Custom table"><svg viewBox="0 0 16 16"><path d="M9 5l4 1.500v5L9 13.500l-4-2v-5zM5 6.500l4 2 4-2M9 8.500v5" fill="#eee" stroke="#444"/><path d="M1 1h8v6H1z" fill="#444"/><path d="M3.500 1v6M6.500 1v6M1 4h8" stroke="#aaa" stroke-width=".8"/><path d="M3 8q-1 4 1 7M14 4q2.500 6 0 11" fill="none" stroke="#444" stroke-width="1.200"/></svg></button>
            <button aria-label="Named views"><svg viewBox="0 0 16 16"><path d="M5 5l6-2 2 6v4l-6 1-4-2 2-3z" fill="#ccc" stroke="#444"/><path d="M5 8l7-1M5 11l7-1" stroke="#444"/><path d="M10 2h4v5M0 10h3M1 8l2 2-2 2" fill="none" stroke="#3c7cc4" stroke-width="1.200"/></svg></button>
            <button class="var tablevar" aria-label="Variables"><svg viewBox="0 0 16 16"><path d="M1 1h9v7H1z" fill="#444"/><path d="M4 1v7M7 1v7M1 4h9" stroke="#aaa" stroke-width=".8"/></svg><span>(<em>x</em>)</span></button>
          </div>
          <div>
            <button aria-label="Material app"><svg viewBox="0 0 16 16"><rect width="16" height="16" rx="3" fill="#ccc"/><circle cx="8" cy="8" r="7" fill="#8c8078"/><path d="M8 8L3 3a7 7 0 0 0 0 10z" fill="#a2694a"/><path d="M8 8l5-5a7 7 0 0 1 0 10z" fill="#4a86d0"/><path d="M8 8l-5 5a7 7 0 0 0 10 0z" fill="#f2a04a"/><path d="M3 3l10 10M13 3L3 13" stroke="#eee"/></svg></button>
            <button class="on" aria-label="VX CostEstimator"><span>VX</span></button>
          </div>
        </div>

        <div class="measure">
          <svg viewBox="0 0 14 12" class="i12"><path d="M1 10V7h4c0-4 1-5 4-5 4 0 4 8 0 8z" fill="#ddd" stroke="#444" stroke-width="1.300"/><circle cx="9" cy="6" r="2" fill="none" stroke="#444"/></svg>
          <svg viewBox="0 0 14 12" class="i14"><path d="M1 10.500C1-1 13-1 13 10.500zM4 10.500c0-5 6-5 6 0" fill="#eee" stroke="#444" stroke-width="1.300"/></svg>
          <svg viewBox="0 0 12 12" class="i12"><path d="M1 2h10M6 1v8M1 7h4L3 2zM7 7h4L9 2zM1 10.500h10" fill="none" stroke="#444"/></svg>
        </div>
      </section>

      <aside class="vx">
        <header>
          <button aria-label="Back"><svg viewBox="0 0 12 12" class="i12"><path d="M11 6H2M6 1.500L1.500 6 6 10.500" fill="none" stroke="#fff" stroke-width="1.500"/></svg></button>
          <span class="logo"><b>VX</b>CostEstimator</span>
          <h2>Analysis Result</h2>
          <small>o…</small>
        </header>
        <div class="body">
          <section class="card dur">
            <h3><svg class="i12"><use href="#stopwatch"/></svg>DURATION ANALYSIS</h3>
            <p class="kind">Milling</p>
            <dl>
              <div><dt>Face milling</dt><dd>4 min</dd></div>
              <div><dt>Pocket milling</dt><dd>9 min</dd></div>
              <div><dt>Drilling</dt><dd>6 min</dd></div>
              <div><dt>Setup</dt><dd>7 min</dd></div>
              <div><dt>Tool changes</dt><dd>2 min</dd></div>
              <div class="total"><dt>TOTAL DURATION</dt><dd>30dk</dd></div>
            </dl>
          </section>
          <section class="card cost">
            <h3><svg viewBox="0 0 14 14" class="i12"><path d="M1 5c1-2 3-3 5-2.500L7 1.500h4V3c2 1 2 2 2 3l-1 4-1.500 1v2H8v-1.500H6V13H3.500v-2.500C2 9 2 7 1 5z" fill="none" stroke="#f0a04c" stroke-width="1.400"/><path d="M5 4.500h3M9 6.500h1" stroke="#f0a04c" stroke-width="1.200"/></svg>COST BREAKDOWN</h3>
            <dl>
              <div><dt>Material Cost</dt><dd>EUR 29.99</dd></div>
              <div><dt>Machining Cost</dt><dd>EUR 19.68</dd></div>
              <div class="unit"><dt>UNIT COST</dt><dd>EUR 49.67</dd></div>
              <div class="offer"><dt>OFFER PRICE</dt><dd>EUR 49.67</dd></div>
            </dl>
            <p class="qty">Quantity Breakdown</p>
            <div class="chart"><i class="hot" style="height:60px"></i><i style="height:53px"></i><i style="height:47px"></i><i style="height:42px"></i><i style="height:37px"></i></div>
          </section>
        </div>
      </aside>
    </div>

    <footer class="tabs">
      <button class="add" aria-label="Add tab"><svg viewBox="0 0 12 12" class="i12"><path d="M6 1v10M1 6h10" stroke="#444" stroke-width="1.600"/></svg></button>
      <button class="ps"><svg viewBox="0 0 10 10" class="i10"><circle cx="5" cy="5" r="4.500" fill="#5f9ad8"/><path d="M5 2v6M2.500 5h5" stroke="#fff" stroke-width="1.200"/></svg><svg viewBox="0 0 14 14" class="i14"><path d="M1.500 4l4-1.500v10h-4zM7 3l3-1.500L13 3v9l-3 1H7z" fill="none" stroke="#555"/><path d="M9 4v8" stroke="#555"/></svg>Part Studio 1</button>
    </footer>
  </div>
</div>
</body>
</html>
```

FILE: styles.css
```css
* { box-sizing: border-box; }
html, body { height: 100%; }
body {
  margin: 0;
  display: flex;
  flex-direction: column;
  overflow: hidden;
  font: 9px/16px Roboto, "Noto Sans", sans-serif;
  color: #333;
  background: #2b2b2b;
  border-bottom: 1px solid #222;
}
button { margin: 0; padding: 0; border: 0; background: none; font: inherit; color: inherit; display: flex; align-items: center; justify-content: center; }
input { font: inherit; min-width: 0; }
a { color: inherit; text-decoration: none; }
ul, dl, dd, h1, h2, h3, p { margin: 0; padding: 0; }
ul { list-style: none; }
svg { flex: none; display: block; }
.defs { position: absolute; width: 0; height: 0; }
.i10 { width: 10px; height: 10px; }
.i12 { width: 12px; height: 12px; }
.i14 { width: 14px; height: 14px; }
.i16 { width: 16px; height: 16px; }
.i18 { width: 18px; height: 18px; }

/* browser chrome */
.browser { flex: none; background: #3c3c3c; color: #d0d0d0; border-bottom: 1px solid #777; }
.tabstrip { display: flex; height: 29px; background: #2b2b2b; padding: 4px 0 0 5px; }
.tabsearch { width: 20px; height: 20px; border-radius: 7px; background: #383838; }
.tab { display: flex; align-items: center; gap: 5px; width: 171px; margin-left: 4px; padding: 0 7px 4px 6px; background: #3c3c3c; border-radius: 8px 8px 0 0; font-family: "Noto Sans", sans-serif; font-size: 8px; color: #e4e4e4; }
.tab span { flex: 1; }
.newtab { margin-left: 10px; height: 21px; }
.winctl { display: flex; gap: 24px; height: 21px; margin-left: auto; padding-right: 11px; }
.address { display: flex; align-items: center; height: 34px; padding: 0 10px 0 11px; gap: 15px; }
.omnibox { flex: 1; display: flex; align-items: center; height: 25px; gap: 12px; margin-left: -4px; padding: 0 11px 0 3px; border-radius: 13px; background: #292929; }
.site { display: grid; place-items: center; width: 20px; height: 20px; border-radius: 10px; background: #3c3c3c; }
.url { flex: 1; margin-left: -7px; color: #bdbdbd; font-size: 10px; white-space: nowrap; }
.url b { font-weight: 400; color: #eee; }
.exts { display: flex; align-items: center; gap: 12px; margin-left: -2px; margin-right: -1px; }
.bar { width: 1px; height: 11px; background: #666; }
.bookmarks { display: flex; align-items: center; height: 25px; padding: 0 9px 5px; gap: 10px; font-family: "Noto Sans", sans-serif; font-size: 8px; color: #c8c8c8; white-space: nowrap; }
.bookmarks a { display: flex; align-items: center; gap: 3px; }
.bookmarks .more { margin-left: auto; margin-right: 5px; }

/* document bar */
.docbar { flex: none; display: flex; align-items: center; height: 26px; padding: 0 3px 0 8px; background: #e8e8e8; white-space: nowrap; font-size: 10px; }
.brand { font: 400 16px/20px Lato, sans-serif; color: #777; margin: 0 7px 4px 5px; }
h1 { font-size: 15px; font-weight: 700; color: #222; margin: 0 6px; }
.branch { color: #999; }
.link { margin: 0 4px 0 8px; }
.loc { display: flex; align-items: center; gap: 2px; color: #888; }
.stats { display: flex; align-items: center; gap: 10px; margin-left: 42px; }
.stats > svg { margin-right: -4px; }
.stats span { display: flex; align-items: center; gap: 4px; }
.world { --land: #e8e8e8; color: #333; }
.account { display: flex; align-items: center; gap: 8px; margin-left: auto; }
.explore { height: 20px; border: 1px solid #aaa; border-radius: 3px; background: #fff; padding: 0 2px; gap: 2px; font-size: 9px; }
.bell { position: relative; width: 18px; justify-content: flex-start; }
.bell span { position: absolute; left: 6px; top: -3px; padding: 0 2px; border-radius: 2px; background: #1d58b0; color: #fff; font-size: 8px; line-height: 9px; font-weight: 700; }
.share { height: 22px; padding: 0 7px; border-radius: 2px; background: #1d55a5; color: #fff; font-weight: 500; }
.help, .user { gap: 5px; }
.user { font-size: 9px; gap: 3px; }
.tri { border: 2px solid transparent; border-top: 3px solid #222; border-bottom: 0; margin-left: 2px; }

/* workspace */
.workspace { flex: 1; min-height: 0; display: flex; background: #fff; }
.rail { flex: none; width: 27px; display: flex; flex-direction: column; align-items: center; background: #fafafa; border-right: 1px solid #ddd; color: #222; }
.rail button { height: 23px; width: 26px; }
.rail hr { width: 100%; margin: 1px 0; border: 0; border-top: 1px solid #ccc; }
.rail .last { margin-top: auto; height: 20px; }
.studio { flex: 1; min-width: 0; display: flex; flex-direction: column; }
.toolbar { flex: none; display: flex; align-items: center; height: 24px; background: #fff; }
.toolbar > button { flex: none; width: 22px; height: 22px; }
.toolbar > button svg { width: 14px; height: 14px; }
.toolbar > .c { width: 13px; }
.toolbar > .c svg { width: 10px; height: 10px; }
.toolbar > i { flex: none; width: 1px; height: 16px; margin: 0 1px; background: #ccc; }
.toolbar > .wide { margin: 0 2px; }
.toolbar > .sketch { width: 56px; gap: 1px; font-size: 10px; color: #333; }
.var { font: 700 11px/14px "Liberation Serif", serif !important; }
.search { display: flex; align-items: center; width: 106px; height: 20px; margin-left: 6px; padding: 0 6px; background: #eee; }
.search input { flex: 1; width: 50px; padding: 0; border: 0; background: none; }
.search input::placeholder { color: #333; opacity: 1; }
kbd { border: 1px solid #aaa; border-radius: 2px; padding: 0 2px; font: 7px/9px Roboto, "DejaVu Sans", sans-serif; background: #fff; }
.main { flex: 1; min-height: 0; display: flex; }

/* feature tree */
.tree { flex: none; width: 136px; display: flex; flex-direction: column; border: 1px solid #ccc; border-width: 1px 1px 0 0; }
.filter { display: flex; align-items: center; gap: 7px; padding: 4px 5px 0 6px; }
.filter input { flex: 1; height: 20px; padding: 0 4px; border: 1px solid #aaa; border-radius: 2px; font-style: italic; }
.filter input::placeholder { color: #777; opacity: 1; }
.feathead { display: flex; align-items: center; height: 20px; padding-left: 2px; color: #222; }
.feathead b { flex: 1; font-weight: 700; }
.feathead button { margin-right: 6px; }
.feathead button:last-child { margin-right: 13px; }
.features { flex: none; height: 299px; display: flex; overflow: hidden; border-bottom: 1px solid #ccc; }
.features > ul { flex: 1; padding-top: 1px; }
.tree li { line-height: 17px; white-space: nowrap; padding-left: 3px; }
.tree li svg { display: inline-block; vertical-align: middle; margin-right: 1px; }
.tree .group { padding-left: 1px; }
.tree .group > svg { margin-right: 3px; }
.tree .group li { padding-left: 14px; }
.tree .group li svg { margin-right: 2px; }
.tree .sub { margin-left: 4px; border-left: 1px solid #ddd; }
.tree .sub li { padding-left: 9px; }
.tree .off { color: #999; }
.scroll { width: 12px; margin-right: 3px; display: flex; flex-direction: column; align-items: center; padding: 4px 0 3px; }
.scroll .up { border: 4px solid transparent; border-top: 0; border-bottom: 5px solid #777; }
.scroll .thumb { width: 6px; height: 136px; margin-top: 4px; border-radius: 3px; background: #888; }
.scroll .down { margin-top: auto; border: 4px solid transparent; border-bottom: 0; border-top: 5px solid #777; }
.parts { flex: 1; }

/* modelling canvas */
.canvas { position: relative; flex: 1; min-width: 0; background: #fff; }
.panel-toggle { position: absolute; left: 0; top: 247px; width: 21px; height: 23px; border: 1px solid #ccc; border-left: 0; background: #fff; }
.model { position: absolute; left: 197px; top: 61px; width: 350px; height: 390px; }
.viewcube { position: absolute; right: 0; top: 1px; width: 123px; height: 120px; }
.cubetxt { font-size: 24px; fill: #222; }
.cubetxt .sm { font-size: 18px; }
.side { position: absolute; right: 0; top: 179px; display: flex; flex-direction: column; gap: 6px; }
.side div { border-left: 1px solid #aaa; }
.side button { width: 21px; height: 22px; background: #eee; border-top: 1px solid #aaa; }
.side button:last-child { border-bottom: 1px solid #aaa; }
.side button svg { width: 15px; height: 15px; }
.side .on { background: #fff; }
.side .on span { width: 14px; height: 14px; border-radius: 3px; background: #0e1a29; color: #3b82d6; font: 700 7px/14px Inter, sans-serif; }
.tablevar { display: grid; }
.tablevar > * { grid-area: 1 / 1; place-self: center; }
.measure { position: absolute; right: 8px; bottom: 1px; display: flex; gap: 10px; }

/* cost estimator panel */
.vx { flex: none; width: 337px; border-left: 4px solid #e8e8e8; display: flex; flex-direction: column; overflow: hidden; background: #0b0f17; color: #e6e8ea; font-size: 10px; }
.vx > header { flex: none; display: flex; align-items: center; height: 37px; padding: 0 8px 0 7px; background: #16212d; border-top: 1px solid #101820; white-space: nowrap; }
.logo { display: flex; gap: 2px; margin: 0 16px 0 7px; font: 600 18px/20px Inter, sans-serif; color: #fff; }
.logo b { font-weight: 800; color: #3277c4; }
.vx h2, .vx h3, .vx small { font-family: "DejaVu Sans Mono", monospace; font-size: 12px; font-weight: 700; }
.vx small { margin-left: 6px; font-size: 9px; color: #f0a04c; }
.body { flex: 1; min-height: 0; padding: 31px 10px 0; display: flex; flex-direction: column; gap: 16px; }
.card { flex: none; border: 1px solid #262d35; border-radius: 8px; padding: 19px 10px 0; background: #21252b; }
.vx h3 { display: flex; align-items: center; gap: 6px; line-height: 16px; }
.vx h3 svg { color: #f0a04c; }
.vx h3::after { content: ""; width: 20px; height: 1px; background: #2f3943; }
.kind { margin-top: 13px; font-size: 9px; line-height: 14px; color: #8b9097; }
.vx dl > div { display: flex; justify-content: space-between; line-height: 18px; color: #b4b8bc; }
.dur dl > div { line-height: 19px; }
.dur dt::before { content: "•"; display: inline-block; width: 8px; font-family: Inter, sans-serif; }
.dur .total dt::before { content: none; }
.vx dd { color: #e6e8ea; font-weight: 500; }
.vx .dur dl > div { line-height: 19px; }
.vx dl > .total { margin-top: 10px; padding: 9px 0; border-top: 1px solid #333a42; color: #fff; font-weight: 700; }
.vx .total dd { color: #f0a04c; }
.cost { background: #0d141f; }
.cost dl { margin-top: 8px; }
.vx .cost dl > div { line-height: 19px; }
.vx dl > .unit { margin-top: 7px; padding: 7px 0 5px; border-top: 1px solid #222a33; }
.vx dl > .offer { padding: 8px 8px 7px; border-radius: 5px; background: #32271c; color: #fff; font-weight: 700; }
.vx .offer dd { color: #f0a04c; }
.qty { margin-top: 14px; text-align: center; font-size: 9px; line-height: 16px; color: #8b9097; }
.chart { display: flex; justify-content: space-around; align-items: flex-end; height: 82px; }
.chart i { width: 11px; border-radius: 2px 2px 0 0; background: #1763c0; }
.chart .hot { background: #f0a04c; }

/* document tabs */
.tabs { flex: none; display: flex; height: 21px; background: #d6d6d6; }
.tabs .add { width: 22px; margin-right: 3px; }
.tabs .ps { width: 131px; gap: 3px; padding-right: 38px; background: #fff; border-bottom: 2px solid #1f66c8; }
```
